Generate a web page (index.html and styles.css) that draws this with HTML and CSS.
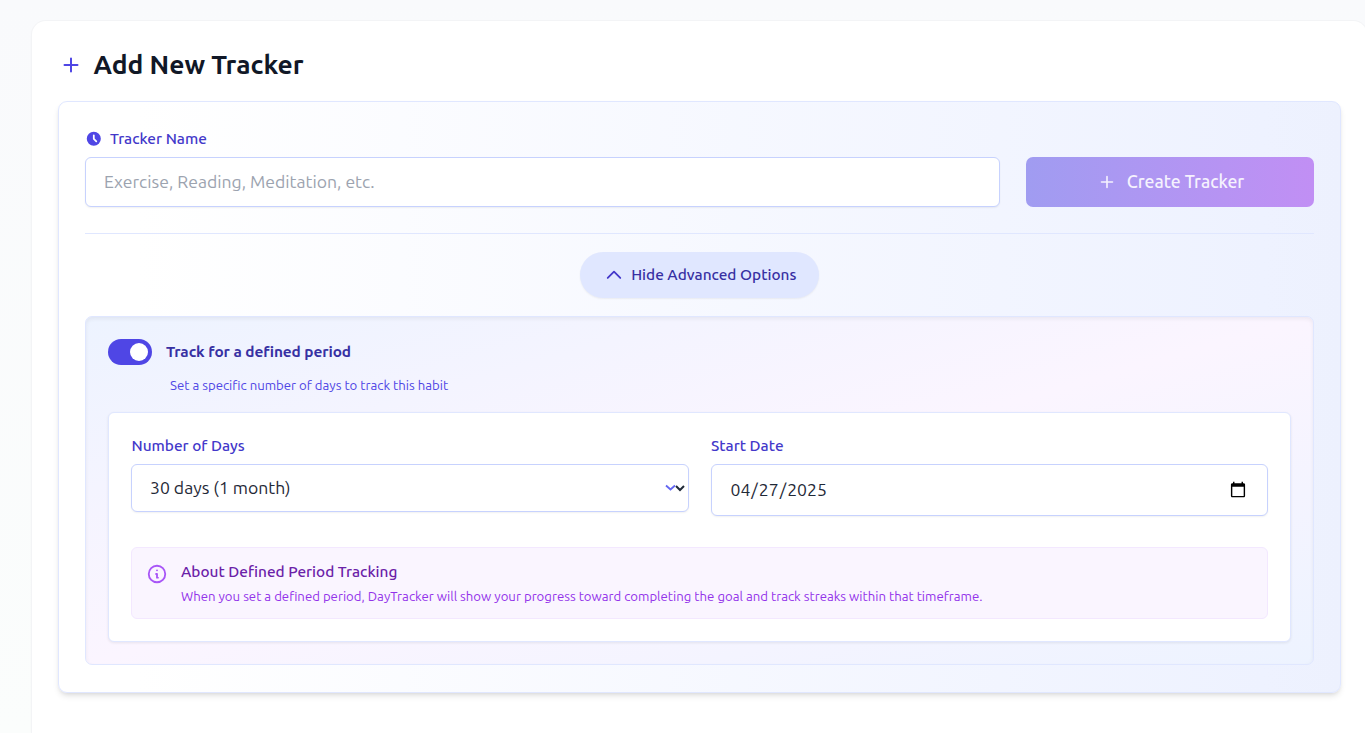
FILE: index.html
```
<!DOCTYPE html>
<html lang="en">
<head>
<meta charset="utf-8">
<title>DayTracker</title>
<link rel="stylesheet" href="styles.css">
</head>
<body>
<main class="card">
  <h1 class="title">
    <svg class="title-icon" viewBox="0 0 22 22" fill="none" stroke="currentColor" stroke-width="2" stroke-linecap="round"><path d="M11 4.500v13M4.500 11h13"/></svg>
    <span>Add New Tracker</span>
  </h1>
  <form class="panel">
    <div class="name-row">
      <div class="name-field">
        <label class="label" for="name">
          <svg class="clock" viewBox="0 0 20 20" fill="currentColor"><path fill-rule="evenodd" clip-rule="evenodd" d="M10 18a8 8 0 100-16 8 8 0 000 16zm1-12a1 1 0 10-2 0v4a1 1 0 00.293.707l2.828 2.829a1 1 0 101.415-1.415L11 9.586V6z"/></svg>
          <span>Tracker Name</span>
        </label>
        <input class="control name-input" id="name" type="text" placeholder="Exercise, Reading, Meditation, etc.">
      </div>
      <button class="create" type="button">
        <svg class="create-icon" viewBox="0 0 18 18" fill="none" stroke="currentColor" stroke-width="1.600" stroke-linecap="round"><path d="M9 3.500v11M3.500 9h11"/></svg>
        <span>Create Tracker</span>
      </button>
    </div>
    <div class="toggle-row">
      <button class="pill" type="button">
        <svg class="pill-icon" viewBox="0 0 24 24" fill="none" stroke="currentColor" stroke-width="2.200" stroke-linecap="round" stroke-linejoin="round"><path d="M4.500 15.500l7.500-7.500 7.500 7.500"/></svg>
        <span>Hide Advanced Options</span>
      </button>
    </div>
    <section class="advanced">
      <div class="switch-row">
        <span class="switch"><span class="knob"></span></span>
        <span class="switch-label">Track for a defined period</span>
      </div>
      <p class="hint">Set a specific number of days to track this habit</p>
      <div class="options">
        <div class="grid">
          <div>
            <label class="label days-label" for="days">Number of Days</label>
            <div class="select-wrap">
              <select class="control select" id="days"><option>30 days (1 month)</option></select>
              <svg class="chevron" viewBox="0 0 12 8" fill="none" stroke="#6366f1" stroke-width="1.800"><path d="M1 1.500l4.500 4 4.500-4"/></svg>
            </div>
          </div>
          <div>
            <label class="label" for="start">Start Date</label>
            <input class="control date" id="start" type="date" value="2025-04-27">
          </div>
        </div>
        <div class="info">
          <svg class="info-icon" viewBox="0 0 24 24" fill="none" stroke="currentColor" stroke-width="2" stroke-linecap="round" stroke-linejoin="round"><path d="M13 16h-1v-4h-1m1-4h.01M21 12a9 9 0 11-18 0 9 9 0 0118 0z"/></svg>
          <div>
            <h2 class="info-title">About Defined Period Tracking</h2>
            <p class="info-text">When you set a defined period, DayTracker will show your progress toward completing the goal and track streaks within that timeframe.</p>
          </div>
        </div>
      </div>
    </section>
  </form>
</main>
</body>
</html>
```
FILE: styles.css
```
* { box-sizing: border-box; }
body {
  margin: 0;
  height: 733px;
  overflow: hidden;
  padding: 21px 0 0 32px;
  background: linear-gradient(#f9fafc, #fbfdfc);
  font-family: Ubuntu, "Open Sans", "Noto Sans", sans-serif;
}
h1, h2, p { margin: 0; }
input, select, button { font-family: inherit; }
.card {
  width: 1335px;
  height: 712px;
  padding: 26px 26px 0;
  border-radius: 14px 14px 0 0;
  background: #fff;
  box-shadow: 0 0 0 1px #f3f4f6, 0 1px 3px rgba(0,0,0,.06);
}
.title {
  display: flex;
  align-items: center;
  height: 36px;
  margin-bottom: 18px;
  padding-left: 2px;
  gap: 11.4px;
  color: #111827;
  font-size: 26.4px;
  font-weight: 600;
  line-height: 34px;
}
.title span { padding-bottom: 2px; }
.title-icon { width: 22px; height: 22px; color: #4f46e5; }
.panel {
  width: 1283px;
  height: 592px;
  padding: 26px;
  border: 1px solid #e0e7ff;
  border-radius: 9px;
  background: linear-gradient(to right, #fff, #fff 6%, #eef2ff 94%, #edf1fe);
  box-shadow: 0 4px 6px -1px rgba(0,0,0,.1), 0 2px 4px -2px rgba(0,0,0,.1);
}
.name-row {
  display: flex;
  align-items: flex-end;
  gap: 26px;
  height: 106px;
  padding-bottom: 26px;
  border-bottom: 1px solid #e0e7ff;
}
.name-field { width: 915px; }
.label {
  display: flex;
  align-items: center;
  height: 22px;
  margin-bottom: 7px;
  color: #4338ca;
  font-size: 15.4px;
  font-weight: 500;
  line-height: 22px;
}
.clock { width: 17.6px; height: 17.6px; margin-right: 7.4px; color: #4f46e5; }
.days-label { padding-left: .5px; }
.control {
  display: block;
  width: 100%;
  border: 1px solid #c7d2fe;
  border-radius: 6px;
  background: #fff;
  color: #1f2937;
  font-size: 17.6px;
  box-shadow: 0 1px 2px rgba(0,0,0,.06);
}
.name-input { height: 50px; padding: 0 18px 1px; }
.name-input::placeholder { color: #9ca3af; }
.create {
  display: flex;
  align-items: center;
  justify-content: center;
  gap: 11px;
  width: 288px;
  height: 50px;
  padding: 0 0 1px 2px;
  border: 0;
  border-radius: 7px;
  background: linear-gradient(to right, #a09cf1, #c18ff4);
  color: #f5f2fe;
  font-size: 17.6px;
  font-weight: 500;
}
.create-icon { width: 18px; height: 18px; }
.toggle-row { display: flex; justify-content: center; padding: 18px 0; }
.pill {
  display: flex;
  align-items: center;
  justify-content: center;
  gap: 7.5px;
  width: 239px;
  height: 46px;
  padding: 0 0 1px 1px;
  border: 0;
  border-radius: 23px;
  background: #e0e7ff;
  color: #3730a3;
  font-size: 15.4px;
  font-weight: 500;
  box-shadow: 0 1px 2px rgba(0,0,0,.06);
}
.pill-icon { width: 20px; height: 20px; color: #4338ca; }
.advanced {
  height: 349px;
  padding: 22px;
  border: 1px solid #e0e7ff;
  border-radius: 7px;
  background: linear-gradient(to bottom right, #edf3ff, #fbf5ff, #edf3ff);
  box-shadow: inset 0 2px 4px rgba(0,0,0,.06);
}
.switch-row { display: flex; align-items: center; gap: 14px; height: 26px; }
.switch {
  display: flex;
  justify-content: flex-end;
  align-items: center;
  width: 44px;
  height: 26px;
  padding-right: 4px;
  border-radius: 13px;
  background: #4f46e5;
}
.knob { width: 18px; height: 18px; border-radius: 50%; background: #fff; }
.switch-label {
  padding-bottom: 1px;
  color: #3730a3;
  font-size: 15.4px;
  font-weight: 600;
  letter-spacing: -.08px;
}
.hint {
  height: 20px;
  margin: 10px 0 17px 62px;
  color: #4f46e5;
  font-size: 13.2px;
  line-height: 20px;
}
.options {
  height: 230px;
  padding: 22px;
  border: 1px solid #e0e7ff;
  border-radius: 6px;
  background: #fff;
  box-shadow: 0 1px 3px rgba(0,0,0,.08);
}
.grid { display: grid; grid-template-columns: 558px 557px; gap: 22px; height: 112px; }
.select-wrap { position: relative; }
.select { height: 48px; padding: 0 0 1px 14px; }
.chevron { position: absolute; right: 12px; top: 20px; width: 12px; height: 8px; }
.date { height: 52px; padding: 0 18.5px 1px 17.5px; }
.info {
  display: flex;
  gap: 13px;
  height: 72px;
  padding: 13px 15px;
  border: 1px solid #f3e8ff;
  border-radius: 6px;
  background: #faf5ff;
}
.info-icon { flex: none; width: 22px; height: 22px; margin: 2px 0 0 -1px; color: #a855f7; }
.info-title {
  color: #6b21a8;
  font-size: 15.4px;
  font-weight: 500;
  line-height: 21px;
}
.info-text {
  margin-top: 5px;
  color: #9333ea;
  font-size: 13.2px;
  line-height: 19px;
}
```
